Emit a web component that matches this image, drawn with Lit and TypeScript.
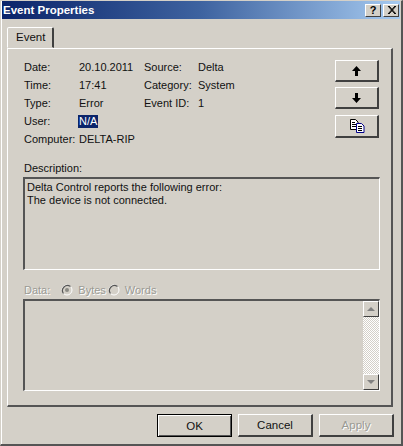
import { LitElement, html, css } from "lit";
import { customElement } from "lit/decorators.js";

@customElement("app-root")
export class AppRoot extends LitElement {
  static styles = css`
    :host { display: block; width: 403px; height: 446px; font: 11px "Liberation Sans", Arial, sans-serif; color: #111; }
    * { box-sizing: border-box; }
    .win { width: 403px; height: 446px; background: #d4d0c8; display: flex; flex-direction: column; padding: 0 1px 0 1px;
      border-top: 1px solid #d4d0c8; border-left: 1px solid #d4d0c8; border-right: 2px solid #555; border-bottom: 2px solid #555; box-shadow: inset 1px 0 0 #fff; }
    .title { height: 18px; flex: none; background: linear-gradient(90deg, #0a246a 0%, #3e63a0 50%, #a6caf0 100%); display: flex; align-items: center; padding: 0 1px 0 1px; }
    .title b { color: #fff; font-size: 11.5px; flex: 1; }
    .cap { width: 16px; height: 13px; background: #d4d0c8; border: 1px solid; border-color: #fff #404040 #404040 #fff; display: flex; align-items: center; justify-content: center; margin-left: 2px; font-size: 11px; font-weight: bold; line-height: 1; color: #000; }
    .cap svg { display: block; }
    .body { flex: 1; padding: 8px 7px 0 5px; display: flex; flex-direction: column; }
    .tabs { height: 21px; display: flex; flex: none; }
    .tab { width: 47px; height: 21px; padding: 3px 0 0 8px; background: #d4d0c8; border: 1px solid; border-color: #fff #404040 transparent #fff; border-right-width: 2px; border-radius: 2px 2px 0 0; margin-bottom: -1px; position: relative; z-index: 1; font-size: 11.5px; }
    .panel { height: 359px; flex: none; border: 1px solid; border-color: #fff #555 #555 #fff; border-right-width: 2px; border-bottom-width: 2px; padding: 9px 12px 0 15px; display: flex; flex-direction: column; }
    .top { display: flex; justify-content: space-between; height: 104px; flex: none; }
    .grid { display: grid; grid-template-columns: 55px 65px 54px auto; grid-auto-rows: 18px; align-items: center; margin-left: 1px; height: 90px; }
    .sel { background: #0a246a; color: #fff; padding: 0 1px; margin-left: -1px; justify-self: start; line-height: 13px; }
    .side { display: flex; flex-direction: column; gap: 5px; padding-top: 2px; }
    .btn { width: 44px; height: 22px; background: #d4d0c8; border: 1px solid; border-color: #fff #404040 #404040 #fff; border-right-width: 2px; border-bottom-width: 2px; display: flex; align-items: center; justify-content: center; }
    .btn:last-child { height: 23px; margin-top: 1px; }
    .btn svg { display: block; }
    .lab { height: 13px; margin-left: 1px; line-height: 13px; }
    .box { border: 1px solid; border-color: #555 #fff #fff #555; border-top-width: 2px; border-left-width: 2px; width: 357px; }
    .desc { margin-top: 2px; height: 93px; padding: 2px; line-height: 13px; }
    .data-row { display: flex; align-items: center; height: 14px; margin-top: 13px; color: #9a9a94; text-shadow: 1px 1px 0 #fff; gap: 2px; margin-left: 1px; }
    .data-row > span:first-child { margin-right: 9px; }
    .radio { display: flex; align-items: center; gap: 5px; }
    .radio svg { display: block; }
    .data { margin-top: 2px; height: 92px; display: flex; justify-content: flex-end; }
    .sb { width: 16px; display: flex; flex-direction: column; background: repeating-conic-gradient(#fff 0 25%, #d4d0c8 0 50%) 0 0 / 2px 2px; }
    .sb .arrow { height: 16px; flex: none; background: #d4d0c8; border: 1px solid; border-color: #fff #404040 #404040 #fff; display: flex; align-items: center; justify-content: center; }
    .sb .fill { flex: 1; }
    .foot { flex: 1; display: flex; justify-content: flex-end; gap: 6px; padding: 7px 0 0 0; margin-right: -1px; }
    .fbtn { width: 75px; height: 23px; background: #d4d0c8; border: 1px solid; border-color: #fff #404040 #404040 #fff; border-right-width: 2px; border-bottom-width: 2px; display: flex; align-items: center; justify-content: center; font-size: 11.5px; }
    .ok { border: 1px solid #000; box-shadow: inset 1px 1px 0 #fff, inset -1px -1px 0 #555; }
    .dis { color: #9a9a94; text-shadow: 1px 1px 0 #fff; }
  `;

  render() {
    return html`<div class="win">
      <div class="title"><b>Event Properties</b>
        <span class="cap">?</span>
        <span class="cap"><svg width="9" height="8" viewBox="0 0 9 8"><path d="M1 0 L8 8 M2 0 L9 8 M8 0 L1 8 M9 0 L2 8" stroke="#000" stroke-width="1" fill="none"/></svg></span>
      </div>
      <div class="body">
        <div class="tabs"><div class="tab">Event</div></div>
        <div class="panel">
          <div class="top">
            <div class="grid">
              <span>Date:</span><span>20.10.2011</span><span>Source:</span><span>Delta</span>
              <span>Time:</span><span>17:41</span><span>Category:</span><span>System</span>
              <span>Type:</span><span>Error</span><span>Event ID:</span><span>1</span>
              <span>User:</span><span class="sel">N/A</span><span></span><span></span>
              <span>Computer:</span><span>DELTA-RIP</span><span></span><span></span>
            </div>
            <div class="side">
              <div class="btn"><svg width="9" height="10" viewBox="0 0 9 10"><path d="M4.5 0 L9 5 L6 5 L6 10 L3 10 L3 5 L0 5 Z" fill="#000"/></svg></div>
              <div class="btn"><svg width="9" height="10" viewBox="0 0 9 10"><path d="M3 0 L6 0 L6 5 L9 5 L4.5 10 L0 5 L3 5 Z" fill="#000"/></svg></div>
              <div class="btn"><svg width="16" height="14" viewBox="0 0 16 14"><path d="M1.5 .5H6.5L9 3V10.5H1.5Z" fill="#fff" stroke="#000"/><path d="M3 3.5H6M3 5.5H7M3 7.5H7" stroke="#000"/><path d="M7.5 4.5H12.5L15 7V13.5H7.5Z" fill="#fff" stroke="#00008a"/><path d="M9 7.5H13M9 9.5H13M9 11.5H13" stroke="#000"/></svg></div>
            </div>
          </div>
          <div class="lab">Description:</div>
          <div class="box desc">Delta Control reports the following error:<br />The device is not connected.</div>
          <div class="data-row"><span>Data:</span>
            <span class="radio"><svg width="12" height="12" viewBox="0 0 12 12"><circle cx="6" cy="6" r="5" fill="#d4d0c8" stroke="#fff"/><path d="M9.5 2.5A5 5 0 0 0 2.5 9.5" fill="none" stroke="#555" stroke-width="1.2"/><circle cx="6" cy="6" r="2" fill="#8a8a84"/></svg>Bytes</span>
            <span class="radio"><svg width="12" height="12" viewBox="0 0 12 12"><circle cx="6" cy="6" r="5" fill="#d4d0c8" stroke="#fff"/><path d="M9.5 2.5A5 5 0 0 0 2.5 9.5" fill="none" stroke="#555" stroke-width="1.2"/></svg>Words</span>
          </div>
          <div class="box data">
            <div class="sb">
              <div class="arrow"><svg width="8" height="4" viewBox="0 0 8 4"><path d="M4 0 L8 4 H0 Z" fill="#808080"/></svg></div>
              <div class="fill"></div>
              <div class="arrow"><svg width="8" height="4" viewBox="0 0 8 4"><path d="M0 0 H8 L4 4 Z" fill="#808080"/></svg></div>
            </div>
          </div>
        </div>
        <div class="foot">
          <div class="fbtn ok">OK</div>
          <div class="fbtn">Cancel</div>
          <div class="fbtn dis">Apply</div>
        </div>
      </div>
    </div>`;
  }
}
